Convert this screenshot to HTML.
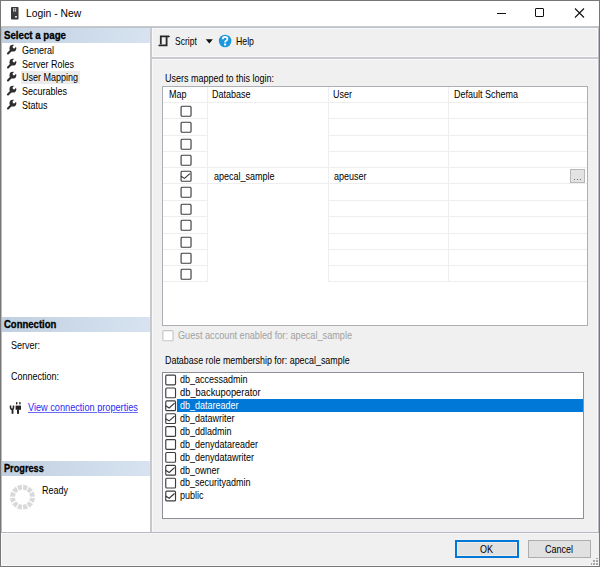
<!DOCTYPE html>
<html><head><meta charset="utf-8"><style>
html,body{margin:0;padding:0;}
body{width:600px;height:567px;position:relative;overflow:hidden;background:#f0f0f0;font-family:"Liberation Sans",sans-serif;font-size:10px;color:#000;}
div,svg{position:absolute;}
.t{white-space:nowrap;}
.hdr{left:2px;width:148px;background:linear-gradient(to right,#c1d0e1,#d7e3f0);}
.cb{width:9px;height:9px;border:1px solid #3c3c3c;border-radius:1px;background:#fff;}
</style></head><body>
<div style="left:1px;top:1px;width:598px;height:25px;background:#fff;"></div>
<div style="left:1px;top:26px;width:598px;height:1px;background:#c9c9c9;"></div>
<svg style="left:11px;top:7px;" width="8" height="13" viewBox="0 0 8 13"><rect x="0" y="0" width="7.5" height="12.5" rx="0.8" fill="#383838"/><rect x="2" y="1.2" width="1.4" height="1.5" fill="#d8d8d8"/><rect x="3.8" y="1.2" width="1.4" height="1.5" fill="#d8d8d8"/><rect x="2" y="3.1" width="1.4" height="1.5" fill="#d8d8d8"/><rect x="3.8" y="3.1" width="1.4" height="1.5" fill="#d8d8d8"/><rect x="1.5" y="6.5" width="4.5" height="0.5" fill="#555"/><rect x="3.9" y="9" width="2.1" height="1.6" fill="#ddd"/></svg>
<div class="t" style="left:26.00px;top:7.49px;font-size:11px;line-height:12px;transform:scaleX(0.940);transform-origin:0 0;">Login - New</div>
<div style="left:497px;top:13px;width:9px;height:1px;background:#111;"></div>
<div style="left:535px;top:8px;width:7px;height:7px;border:1px solid #111;border-radius:1px;"></div>
<svg style="left:574px;top:8px;" width="11" height="11" viewBox="0 0 11 11"><path d="M1 0.5L10 9.5M10 0.5L1 9.5" stroke="#111" stroke-width="1.1"/></svg>
<div style="left:1px;top:27px;width:149px;height:505px;background:#fff;"></div>
<div style="left:150px;top:27px;width:2px;height:505px;background:#c7c9ce;"></div>
<div style="left:152px;top:27px;width:1px;height:505px;background:#f8f8f7;"></div>
<div style="left:1px;top:27px;width:1px;height:505px;background:#b9bcc2;"></div>
<div style="left:598px;top:27px;width:1px;height:505px;background:#b9bcc2;"></div>
<div style="left:597px;top:27px;width:1px;height:505px;background:#f8f8f8;"></div>
<div class="hdr" style="top:28px;height:15px;"></div>
<div class="t" style="left:3.75px;top:28.86px;font-size:10.5px;line-height:12px;font-weight:700;-webkit-text-stroke:0.3px #000;transform:scaleX(0.924);transform-origin:0 0;">Select a page</div>
<div style="left:21px;top:70.5px;width:59px;height:13.5px;background:#ebebeb;"></div>
<svg style="left:6.30px;top:43.00px;" width="12" height="12" viewBox="0 0 12 12"><path d="M5.4 6.9 L2.0 10.4" stroke="#2e2e2e" stroke-width="2.1" stroke-linecap="round"/><circle cx="6.9" cy="5.2" r="3.4" fill="#2e2e2e"/><circle cx="8.0" cy="4.0" r="1.4" fill="#fff"/><path d="M8.0 4.0 L10.6 1.4" stroke="#fff" stroke-width="2.2"/></svg>
<div class="t" style="left:21.70px;top:43.86px;font-size:10.5px;line-height:12px;transform:scaleX(0.857);transform-origin:0 0;">General</div>
<svg style="left:6.30px;top:56.70px;" width="12" height="12" viewBox="0 0 12 12"><path d="M5.4 6.9 L2.0 10.4" stroke="#2e2e2e" stroke-width="2.1" stroke-linecap="round"/><circle cx="6.9" cy="5.2" r="3.4" fill="#2e2e2e"/><circle cx="8.0" cy="4.0" r="1.4" fill="#fff"/><path d="M8.0 4.0 L10.6 1.4" stroke="#fff" stroke-width="2.2"/></svg>
<div class="t" style="left:21.70px;top:57.56px;font-size:10.5px;line-height:12px;transform:scaleX(0.857);transform-origin:0 0;">Server Roles</div>
<svg style="left:6.30px;top:70.40px;" width="12" height="12" viewBox="0 0 12 12"><path d="M5.4 6.9 L2.0 10.4" stroke="#2e2e2e" stroke-width="2.1" stroke-linecap="round"/><circle cx="6.9" cy="5.2" r="3.4" fill="#2e2e2e"/><circle cx="8.0" cy="4.0" r="1.4" fill="#fff"/><path d="M8.0 4.0 L10.6 1.4" stroke="#fff" stroke-width="2.2"/></svg>
<div class="t" style="left:21.70px;top:71.26px;font-size:10.5px;line-height:12px;transform:scaleX(0.857);transform-origin:0 0;">User Mapping</div>
<svg style="left:6.30px;top:84.10px;" width="12" height="12" viewBox="0 0 12 12"><path d="M5.4 6.9 L2.0 10.4" stroke="#2e2e2e" stroke-width="2.1" stroke-linecap="round"/><circle cx="6.9" cy="5.2" r="3.4" fill="#2e2e2e"/><circle cx="8.0" cy="4.0" r="1.4" fill="#fff"/><path d="M8.0 4.0 L10.6 1.4" stroke="#fff" stroke-width="2.2"/></svg>
<div class="t" style="left:21.70px;top:84.96px;font-size:10.5px;line-height:12px;transform:scaleX(0.857);transform-origin:0 0;">Securables</div>
<svg style="left:6.30px;top:97.80px;" width="12" height="12" viewBox="0 0 12 12"><path d="M5.4 6.9 L2.0 10.4" stroke="#2e2e2e" stroke-width="2.1" stroke-linecap="round"/><circle cx="6.9" cy="5.2" r="3.4" fill="#2e2e2e"/><circle cx="8.0" cy="4.0" r="1.4" fill="#fff"/><path d="M8.0 4.0 L10.6 1.4" stroke="#fff" stroke-width="2.2"/></svg>
<div class="t" style="left:21.70px;top:98.66px;font-size:10.5px;line-height:12px;transform:scaleX(0.857);transform-origin:0 0;">Status</div>
<div class="hdr" style="top:317px;height:15px;"></div>
<div class="t" style="left:4.00px;top:318.36px;font-size:10.5px;line-height:12px;font-weight:700;-webkit-text-stroke:0.3px #000;transform:scaleX(0.906);transform-origin:0 0;">Connection</div>
<div class="t" style="left:11.00px;top:339.36px;font-size:10.5px;line-height:12px;transform:scaleX(0.857);transform-origin:0 0;">Server:</div>
<div class="t" style="left:11.00px;top:369.86px;font-size:10.5px;line-height:12px;transform:scaleX(0.857);transform-origin:0 0;">Connection:</div>
<svg style="left:6px;top:398px;" width="20" height="18" viewBox="0 0 20 18"><path d="M4.5 7.5 V9.3 Q4.5 11.3 6.1 11.3 Q7.5 11.3 7.5 9.3 V7.5" stroke="#2a2a2a" stroke-width="1.6" fill="none"/><rect x="5.6" y="11" width="1.8" height="4.8" fill="#222"/><rect x="10" y="4" width="1.4" height="2.4" rx="0.6" fill="#222"/><rect x="13.2" y="4" width="1.4" height="2.4" rx="0.6" fill="#222"/><rect x="9.6" y="7.6" width="5.4" height="4.2" fill="#222"/><rect x="11" y="11.5" width="2" height="4.3" fill="#222"/></svg>
<div class="t" style="left:28.00px;top:400.86px;font-size:10.5px;line-height:12px;color:#2a2af0;transform:scaleX(0.873);transform-origin:0 0;text-decoration:underline;text-decoration-color:#6a6af4;">View connection properties</div>
<div class="hdr" style="top:461px;height:15px;"></div>
<div class="t" style="left:4.00px;top:462.36px;font-size:10.5px;line-height:12px;font-weight:700;-webkit-text-stroke:0.3px #000;transform:scaleX(0.874);transform-origin:0 0;">Progress</div>
<svg style="left:0;top:0;" width="60" height="567" viewBox="0 0 60 567"><path d="M35.08 497.97 L33.78 502.82 L29.30 500.59 L30.09 497.66Z M33.01 504.15 L29.45 507.71 L26.69 503.54 L28.84 501.39Z M28.12 508.48 L23.27 509.78 L22.96 504.79 L25.89 504.00Z M21.73 509.78 L16.88 508.48 L19.11 504.00 L22.04 504.79Z M15.55 507.71 L11.99 504.15 L16.16 501.39 L18.31 503.54Z M11.22 502.82 L9.92 497.97 L14.91 497.66 L15.70 500.59Z M9.92 496.43 L11.22 491.58 L15.70 493.81 L14.91 496.74Z M11.99 490.25 L15.55 486.69 L18.31 490.86 L16.16 493.01Z M16.88 485.92 L21.73 484.62 L22.04 489.61 L19.11 490.40Z M23.27 484.62 L28.12 485.92 L25.89 490.40 L22.96 489.61Z M29.45 486.69 L33.01 490.25 L28.84 493.01 L26.69 490.86Z M33.78 491.58 L35.08 496.43 L30.09 496.74 L29.30 493.81Z" fill="#d9d9d9"/></svg>
<div class="t" style="left:42.00px;top:483.86px;font-size:10.5px;line-height:12px;transform:scaleX(0.857);transform-origin:0 0;">Ready</div>
<div style="left:153px;top:56px;width:444px;height:1px;background:#f8f8f8;"></div>
<div style="left:153px;top:28px;width:444px;height:1px;background:#f8f8f8;"></div>
<div style="left:1px;top:27px;width:598px;height:1px;background:#bcc3cd;"></div>
<div style="left:151px;top:57px;width:447px;height:2px;background:#c9cbd0;"></div>
<div style="left:153px;top:59px;width:444px;height:1px;background:#f8f8f8;"></div>
<svg style="left:156px;top:33px;" width="16" height="15" viewBox="0 0 16 15"><path d="M4.8 11.3 V3.4 H12.8" stroke="#262626" stroke-width="1.8" fill="none"/><path d="M12.2 2.5 Q14 2.5 14 4 L12.2 4.3Z" fill="#262626"/><path d="M10.6 4 V12.4 H3.2" stroke="#262626" stroke-width="1.8" fill="none"/><path d="M3.4 11.5 Q2.2 11.6 2.3 13.1 L3.6 13.3Z" fill="#262626"/></svg>
<div class="t" style="left:174.50px;top:35.06px;font-size:10.5px;line-height:12px;transform:scaleX(0.810);transform-origin:0 0;">Script</div>
<svg style="left:205px;top:39px;" width="9" height="5" viewBox="0 0 9 5"><path d="M0.8 0.2L7.8 0.2L4.3 4.5Z" fill="#111"/></svg>
<svg style="left:218px;top:34px;" width="14" height="14" viewBox="0 0 14 14"><circle cx="7.1" cy="7" r="6.3" fill="#1c97dd"/><path d="M4.8 5.2 Q4.8 2.9 7.1 2.9 Q9.4 2.9 9.4 4.9 Q9.4 6.2 8.1 6.8 Q7.1 7.3 7.1 8.5" stroke="#fff" stroke-width="1.8" fill="none"/><rect x="6.1" y="9.5" width="2" height="2" fill="#fff"/></svg>
<div class="t" style="left:235.60px;top:35.06px;font-size:10.5px;line-height:12px;transform:scaleX(0.830);transform-origin:0 0;">Help</div>
<div class="t" style="left:165.10px;top:72.36px;font-size:10.5px;line-height:12px;transform:scaleX(0.857);transform-origin:0 0;">Users mapped to this login:</div>
<div style="left:162px;top:86px;width:424px;height:238px;border:1px solid #abaeb3;background:#fff;"></div>
<div style="left:163px;top:102px;width:424px;height:1px;background:#eeeeee;"></div>
<div style="left:163px;top:118px;width:45px;height:1px;background:#eeeeee;"></div>
<div style="left:328px;top:118px;width:259px;height:1px;background:#eeeeee;"></div>
<div style="left:163px;top:135px;width:45px;height:1px;background:#eeeeee;"></div>
<div style="left:328px;top:135px;width:259px;height:1px;background:#eeeeee;"></div>
<div style="left:163px;top:151px;width:45px;height:1px;background:#eeeeee;"></div>
<div style="left:328px;top:151px;width:259px;height:1px;background:#eeeeee;"></div>
<div style="left:163px;top:167px;width:45px;height:1px;background:#eeeeee;"></div>
<div style="left:328px;top:167px;width:259px;height:1px;background:#eeeeee;"></div>
<div style="left:163px;top:183px;width:45px;height:1px;background:#eeeeee;"></div>
<div style="left:328px;top:183px;width:259px;height:1px;background:#eeeeee;"></div>
<div style="left:163px;top:200px;width:45px;height:1px;background:#eeeeee;"></div>
<div style="left:328px;top:200px;width:259px;height:1px;background:#eeeeee;"></div>
<div style="left:163px;top:216px;width:45px;height:1px;background:#eeeeee;"></div>
<div style="left:328px;top:216px;width:259px;height:1px;background:#eeeeee;"></div>
<div style="left:163px;top:233px;width:45px;height:1px;background:#eeeeee;"></div>
<div style="left:328px;top:233px;width:259px;height:1px;background:#eeeeee;"></div>
<div style="left:163px;top:249px;width:45px;height:1px;background:#eeeeee;"></div>
<div style="left:328px;top:249px;width:259px;height:1px;background:#eeeeee;"></div>
<div style="left:163px;top:265px;width:45px;height:1px;background:#eeeeee;"></div>
<div style="left:328px;top:265px;width:259px;height:1px;background:#eeeeee;"></div>
<div style="left:163px;top:281px;width:45px;height:1px;background:#eeeeee;"></div>
<div style="left:328px;top:281px;width:259px;height:1px;background:#eeeeee;"></div>
<div style="left:208px;top:167px;width:120px;height:1px;background:#eeeeee;"></div>
<div style="left:208px;top:183px;width:120px;height:1px;background:#eeeeee;"></div>
<div style="left:207px;top:87px;width:1px;height:195px;background:#eeeeee;"></div>
<div style="left:328px;top:87px;width:1px;height:195px;background:#eeeeee;"></div>
<div style="left:448px;top:87px;width:1px;height:195px;background:#eeeeee;"></div>
<div class="t" style="left:169.00px;top:88.36px;font-size:10.5px;line-height:12px;transform:scaleX(0.857);transform-origin:0 0;">Map</div>
<div class="t" style="left:212.00px;top:88.36px;font-size:10.5px;line-height:12px;transform:scaleX(0.857);transform-origin:0 0;">Database</div>
<div class="t" style="left:332.80px;top:88.36px;font-size:10.5px;line-height:12px;transform:scaleX(0.857);transform-origin:0 0;">User</div>
<div class="t" style="left:453.50px;top:88.36px;font-size:10.5px;line-height:12px;transform:scaleX(0.857);transform-origin:0 0;">Default Schema</div>
<svg style="left:179px;top:104px;" width="15" height="15" viewBox="0 0 15 15"><rect x="2.08" y="2.28" width="9.95" height="9.95" rx="1" fill="#fff" stroke="#3c3c3c" stroke-width="1.15"/></svg>
<svg style="left:179px;top:120px;" width="15" height="15" viewBox="0 0 15 15"><rect x="2.08" y="2.28" width="9.95" height="9.95" rx="1" fill="#fff" stroke="#3c3c3c" stroke-width="1.15"/></svg>
<svg style="left:179px;top:137px;" width="15" height="15" viewBox="0 0 15 15"><rect x="2.08" y="2.27" width="9.95" height="9.95" rx="1" fill="#fff" stroke="#3c3c3c" stroke-width="1.15"/></svg>
<svg style="left:179px;top:153px;" width="15" height="15" viewBox="0 0 15 15"><rect x="2.08" y="2.27" width="9.95" height="9.95" rx="1" fill="#fff" stroke="#3c3c3c" stroke-width="1.15"/></svg>
<svg style="left:179px;top:169px;" width="15" height="15" viewBox="0 0 15 15"><rect x="2.08" y="2.27" width="9.95" height="9.95" rx="1" fill="#fff" stroke="#3c3c3c" stroke-width="1.15"/><path d="M1.98 7.17 L5.47 9.37 L10.88 4.57" stroke="#333" stroke-width="1.15" fill="none"/></svg>
<svg style="left:179px;top:185px;" width="15" height="15" viewBox="0 0 15 15"><rect x="2.08" y="2.27" width="9.95" height="9.95" rx="1" fill="#fff" stroke="#3c3c3c" stroke-width="1.15"/></svg>
<svg style="left:179px;top:202px;" width="15" height="15" viewBox="0 0 15 15"><rect x="2.08" y="2.27" width="9.95" height="9.95" rx="1" fill="#fff" stroke="#3c3c3c" stroke-width="1.15"/></svg>
<svg style="left:179px;top:218px;" width="15" height="15" viewBox="0 0 15 15"><rect x="2.08" y="2.27" width="9.95" height="9.95" rx="1" fill="#fff" stroke="#3c3c3c" stroke-width="1.15"/></svg>
<svg style="left:179px;top:235px;" width="15" height="15" viewBox="0 0 15 15"><rect x="2.08" y="2.27" width="9.95" height="9.95" rx="1" fill="#fff" stroke="#3c3c3c" stroke-width="1.15"/></svg>
<svg style="left:179px;top:251px;" width="15" height="15" viewBox="0 0 15 15"><rect x="2.08" y="2.27" width="9.95" height="9.95" rx="1" fill="#fff" stroke="#3c3c3c" stroke-width="1.15"/></svg>
<svg style="left:179px;top:267px;" width="15" height="15" viewBox="0 0 15 15"><rect x="2.08" y="2.27" width="9.95" height="9.95" rx="1" fill="#fff" stroke="#3c3c3c" stroke-width="1.15"/></svg>
<div class="t" style="left:214.00px;top:169.86px;font-size:10.5px;line-height:12px;transform:scaleX(0.857);transform-origin:0 0;">apecal_sample</div>
<div class="t" style="left:333.50px;top:169.86px;font-size:10.5px;line-height:12px;transform:scaleX(0.857);transform-origin:0 0;">apeuser</div>
<div style="left:570px;top:169px;width:13px;height:12px;border:1px solid #b8b8b8;background:#e3e3e3;"></div>
<div style="left:573.5px;top:178.5px;width:1.2px;height:1.2px;background:#6a6a6a;"></div>
<div style="left:576.5px;top:178.5px;width:1.2px;height:1.2px;background:#6a6a6a;"></div>
<div style="left:579.5px;top:178.5px;width:1.2px;height:1.2px;background:#6a6a6a;"></div>
<svg style="left:161px;top:329px;" width="15" height="15" viewBox="0 0 15 15"><rect x="1.88" y="1.57" width="10.15" height="10.15" rx="1" fill="#fff" stroke="#c6c6c6" stroke-width="1.15"/></svg>
<div class="t" style="left:178.30px;top:328.86px;font-size:10.5px;line-height:12px;color:#a0a0a0;transform:scaleX(0.872);transform-origin:0 0;">Guest account enabled for: apecal_sample</div>
<div class="t" style="left:165.20px;top:354.36px;font-size:10.5px;line-height:12px;transform:scaleX(0.848);transform-origin:0 0;">Database role membership for: apecal_sample</div>
<div style="left:162px;top:372px;width:420px;height:145px;border:1px solid #8c8f96;background:#fff;"></div>
<div style="left:177px;top:399.4px;width:406px;height:12.6px;background:#0078d7;"></div>
<svg style="left:164px;top:373px;" width="15" height="15" viewBox="0 0 15 15"><rect x="1.77" y="2.08" width="9.75" height="9.75" rx="1" fill="#fff" stroke="#3c3c3c" stroke-width="1.15"/></svg>
<div class="t" style="left:180.00px;top:373.26px;font-size:10.5px;line-height:12px;transform:scaleX(0.857);transform-origin:0 0;">db_accessadmin</div>
<svg style="left:164px;top:386px;" width="15" height="15" viewBox="0 0 15 15"><rect x="1.77" y="1.97" width="9.75" height="9.75" rx="1" fill="#fff" stroke="#3c3c3c" stroke-width="1.15"/></svg>
<div class="t" style="left:180.00px;top:386.16px;font-size:10.5px;line-height:12px;transform:scaleX(0.890);transform-origin:0 0;">db_backupoperator</div>
<svg style="left:164px;top:399px;" width="15" height="15" viewBox="0 0 15 15"><rect x="1.77" y="1.88" width="9.75" height="9.75" rx="1" fill="#fff" stroke="#3c3c3c" stroke-width="1.15"/><path d="M1.67 6.78 L5.17 8.98 L10.57 4.18" stroke="#333" stroke-width="1.15" fill="none"/></svg>
<div class="t" style="left:180.00px;top:399.06px;font-size:10.5px;line-height:12px;color:#fff;transform:scaleX(0.857);transform-origin:0 0;">db_datareader</div>
<svg style="left:164px;top:412px;" width="15" height="15" viewBox="0 0 15 15"><rect x="1.77" y="1.77" width="9.75" height="9.75" rx="1" fill="#fff" stroke="#3c3c3c" stroke-width="1.15"/><path d="M1.67 6.67 L5.17 8.87 L10.57 4.07" stroke="#333" stroke-width="1.15" fill="none"/></svg>
<div class="t" style="left:180.00px;top:411.96px;font-size:10.5px;line-height:12px;transform:scaleX(0.857);transform-origin:0 0;">db_datawriter</div>
<svg style="left:164px;top:425px;" width="15" height="15" viewBox="0 0 15 15"><rect x="1.77" y="1.68" width="9.75" height="9.75" rx="1" fill="#fff" stroke="#3c3c3c" stroke-width="1.15"/></svg>
<div class="t" style="left:180.00px;top:424.86px;font-size:10.5px;line-height:12px;transform:scaleX(0.857);transform-origin:0 0;">db_ddladmin</div>
<svg style="left:164px;top:438px;" width="15" height="15" viewBox="0 0 15 15"><rect x="1.77" y="1.57" width="9.75" height="9.75" rx="1" fill="#fff" stroke="#3c3c3c" stroke-width="1.15"/></svg>
<div class="t" style="left:180.00px;top:437.76px;font-size:10.5px;line-height:12px;transform:scaleX(0.857);transform-origin:0 0;">db_denydatareader</div>
<svg style="left:164px;top:450px;" width="15" height="15" viewBox="0 0 15 15"><rect x="1.77" y="2.47" width="9.75" height="9.75" rx="1" fill="#fff" stroke="#3c3c3c" stroke-width="1.15"/></svg>
<div class="t" style="left:180.00px;top:450.66px;font-size:10.5px;line-height:12px;transform:scaleX(0.857);transform-origin:0 0;">db_denydatawriter</div>
<svg style="left:164px;top:463px;" width="15" height="15" viewBox="0 0 15 15"><rect x="1.77" y="2.38" width="9.75" height="9.75" rx="1" fill="#fff" stroke="#3c3c3c" stroke-width="1.15"/><path d="M1.67 7.28 L5.17 9.48 L10.57 4.68" stroke="#333" stroke-width="1.15" fill="none"/></svg>
<div class="t" style="left:180.00px;top:463.56px;font-size:10.5px;line-height:12px;transform:scaleX(0.857);transform-origin:0 0;">db_owner</div>
<svg style="left:164px;top:476px;" width="15" height="15" viewBox="0 0 15 15"><rect x="1.77" y="2.27" width="9.75" height="9.75" rx="1" fill="#fff" stroke="#3c3c3c" stroke-width="1.15"/></svg>
<div class="t" style="left:180.00px;top:476.46px;font-size:10.5px;line-height:12px;transform:scaleX(0.857);transform-origin:0 0;">db_securityadmin</div>
<svg style="left:164px;top:489px;" width="15" height="15" viewBox="0 0 15 15"><rect x="1.77" y="2.18" width="9.75" height="9.75" rx="1" fill="#fff" stroke="#3c3c3c" stroke-width="1.15"/><path d="M1.67 7.08 L5.17 9.28 L10.57 4.48" stroke="#333" stroke-width="1.15" fill="none"/></svg>
<div class="t" style="left:180.00px;top:489.36px;font-size:10.5px;line-height:12px;transform:scaleX(0.857);transform-origin:0 0;">public</div>
<div style="left:1px;top:532px;width:598px;height:1px;background:#b5b8bf;"></div>
<div style="left:1px;top:533px;width:597px;height:1px;background:#f8f8f8;"></div>
<div style="left:1px;top:533px;width:1px;height:33px;background:#f8f8f8;"></div>
<div style="left:1px;top:565px;width:598px;height:1px;background:#f8f8f8;"></div>
<div style="left:455px;top:540px;width:60px;height:14px;border:2px solid #0078d7;background:#e1e1e1;box-shadow:inset 0 0 0 1px #f2ece6;"></div>
<div class="t" style="left:480.00px;top:543.36px;font-size:10.5px;line-height:12px;transform:scaleX(0.857);transform-origin:0 0;">OK</div>
<div style="left:528px;top:540px;width:61px;height:16px;border:1px solid #adadad;background:#e1e1e1;"></div>
<div class="t" style="left:545.00px;top:543.36px;font-size:10.5px;line-height:12px;transform:scaleX(0.857);transform-origin:0 0;">Cancel</div>
<div style="left:596px;top:557.5px;width:1.5px;height:1.5px;background:#a8a8a8;"></div>
<div style="left:593.3px;top:560.3px;width:1.5px;height:1.5px;background:#a8a8a8;"></div>
<div style="left:596px;top:560.3px;width:1.5px;height:1.5px;background:#a8a8a8;"></div>
<div style="left:590.6px;top:563px;width:1.5px;height:1.5px;background:#a8a8a8;"></div>
<div style="left:593.3px;top:563px;width:1.5px;height:1.5px;background:#a8a8a8;"></div>
<div style="left:596px;top:563px;width:1.5px;height:1.5px;background:#a8a8a8;"></div>
<div style="left:0;top:0;width:598px;height:565px;border:1px solid #777;"></div>
</body></html>
